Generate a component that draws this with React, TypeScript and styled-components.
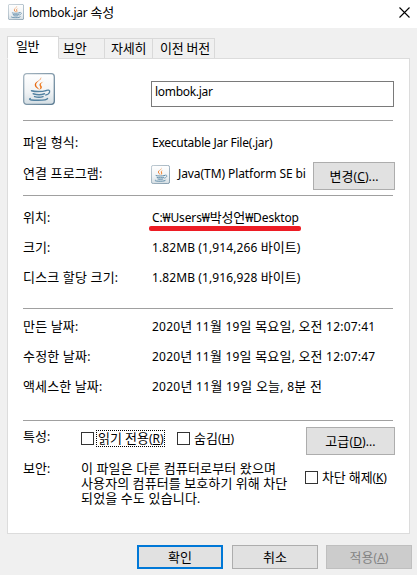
import React from "react";
import styled, { createGlobalStyle, css } from "styled-components";

const GlobalStyle = createGlobalStyle`
  * { box-sizing: border-box; }
  body {
    margin: 0;
    background: #f0f0f0;
    color: #000;
    font-family: "Noto Sans CJK KR", sans-serif;
    font-size: 13px;
  }
`;

const Dialog = styled.div`
  width: 417px;
  height: 575px;
  display: flex;
  flex-direction: column;
  background: #f0f0f0;
  overflow: hidden;
`;

const TitleBar = styled.header`
  height: 28px;
  flex: none;
  display: flex;
  align-items: flex-start;
  background: #fff;
  padding: 4px 7px 0 8px;
`;

const TitleText = styled.div`
  flex: 1;
  margin: 0 0 0 5px;
  display: flex;
  height: 16px;
  align-items: center;
`;

const CloseIcon = styled.svg`
  width: 11px;
  height: 11px;
  margin: 3px 0 0;
`;

const Line = styled.span<{ $ls?: number }>`
  display: block;
  white-space: pre;
  line-height: 15px;
  letter-spacing: ${(p) => p.$ls ?? 0}px;
`;

const Latin = styled.span`
  font-family: "Noto Sans", "Noto Sans CJK KR", sans-serif;
  font-size: 12px;
`;

const AccessKey = styled.u`
  text-decoration-thickness: 1px;
  text-underline-offset: 1px;
`;

/* Hangul and Latin runs use different faces, so each run is wrapped on its own. */
function T({ ls, children }: { ls?: number; children: string }) {
  const runs = children.split(/([^\uac00-\ud7a3]+)/).filter(Boolean);
  return (
    <Line $ls={ls}>
      {runs.map((r, i) => {
        if (/[\uac00-\ud7a3]/.test(r)) return r;
        const key = r.match(/^(.*)&(.)(.*)$/);
        return (
          <Latin key={i}>
            {key ? (
              <>
                {key[1]}
                <AccessKey>{key[2]}</AccessKey>
                {key[3]}
              </>
            ) : (
              r
            )}
          </Latin>
        );
      })}
    </Line>
  );
}

const Tabs = styled.nav`
  flex: none;
  display: flex;
  align-items: flex-end;
  height: 31px;
  padding-left: 7px;
`;

const Tab = styled.div<{ $w: number; $pad: number; $active?: boolean }>`
  width: ${(p) => p.$w}px;
  height: 21px;
  padding: 1px 0 0 ${(p) => p.$pad}px;
  border: 1px solid #d9d9d9;
  border-left: 0;
  background: #f0f0f0;
  ${(p) =>
    p.$active &&
    css`
      height: 23px;
      border-left: 1px solid #d9d9d9;
      border-bottom-color: #fff;
      background: #fff;
      position: relative;
      z-index: 1;
    `}
`;

const Pane = styled.main`
  flex: none;
  width: 403px;
  height: 476px;
  margin: -1px 0 0 7px;
  padding: 0 16px 0 15px;
  background: #fff;
  border: 1px solid #dcdcdc;
  display: flex;
  flex-direction: column;
`;

const Section = styled.section<{ $h: number; $top?: number }>`
  height: ${(p) => p.$h}px;
  padding-top: ${(p) => p.$top ?? 0}px;
  flex: none;
  & + & {
    border-top: 1px solid #a0a0a0;
  }
`;

const Header = styled.div`
  display: flex;
  padding-top: 14px;
`;

const NameField = styled.div`
  flex: none;
  width: 243px;
  height: 26px;
  margin: 8px 0 0 96px;
  padding: 1px 0 0 3px;
  border: 1px solid #7a7a7a;
`;

const Row = styled.div`
  display: flex;
  align-items: center;
  height: 30px;
`;

const ProgramRow = styled.div`
  display: flex;
  align-items: flex-start;
  height: 33px;
  padding-top: 5px;
`;

const Label = styled.div<{ $w?: number }>`
  width: ${(p) => p.$w ?? 129}px;
  flex: none;
`;

const ProgramLabel = styled(Label)`
  padding-top: 3px;
`;

const Program = styled.div`
  flex: none;
  display: flex;
  align-items: flex-start;
  width: 162px;
  gap: 8px;
  margin: 3px 0 0 -1px;
`;

const Marked = styled.div`
  position: relative;
  &::after {
    content: "";
    position: absolute;
    left: -3px;
    top: 17px;
    width: 152px;
    height: 5px;
    border-radius: 2px;
    background: #ed1c24;
  }
`;

const Button = styled.div<{ $w: number; $h: number; $kind?: "default" | "disabled" }>`
  flex: none;
  width: ${(p) => p.$w}px;
  height: ${(p) => p.$h}px;
  display: flex;
  align-items: center;
  justify-content: center;
  padding-bottom: 1px;
  background: #e1e1e1;
  border: 1px solid #adadad;
  ${(p) => p.$kind === "default" && css`border: 2px solid #0078d7;`}
  ${(p) =>
    p.$kind === "disabled" &&
    css`
      background: #cccccc;
      border-color: #bfbfbf;
      color: #838383;
    `}
`;

const Attributes = styled.div`
  display: flex;
  height: 39px;
`;

const AttrLabel = styled.div`
  width: 58px;
  flex: none;
  padding-top: 7px;
`;

const Check = styled.div`
  display: flex;
  align-items: center;
  height: 17px;
`;

const Box = styled.span`
  width: 13px;
  height: 13px;
  border: 1px solid #333;
  background: #fff;
`;

const Focus = styled.div<{ $on?: boolean; $w?: number }>`
  width: ${(p) => (p.$w ? p.$w + "px" : "auto")};
  height: 17px;
  margin-left: 2px;
  padding-left: 1px;
  border: 1px ${(p) => (p.$on ? "dotted #000" : "solid transparent")};
  & > span {
    margin-top: -1px;
  }
`;

const Checks = styled.div`
  flex: none;
  display: flex;
  width: 225px;
  padding-top: 9px;
  gap: 12px;
`;

const AdvancedSlot = styled.div`
  flex: none;
  padding-top: 6px;
`;

const Security = styled.div`
  display: flex;
`;

const Message = styled.div`
  flex: none;
  width: 224px;
  & > span {
    height: 15px;
  }
`;

const Unblock = styled.div`
  flex: none;
  padding-top: 9px;
`;

const Footer = styled.footer`
  display: flex;
  gap: 9px;
  padding: 11px 0 0 137px;
`;

const ApplySlot = styled.div`
  margin-left: -1px;
`;

const IconSvg = styled.svg`
  flex: none;
  display: block;
`;

function JavaIcon({ size }: { size: number }) {
  return (
    <IconSvg width={size} height={size} viewBox="0 0 32 32">
      <defs>
        <linearGradient id="tile" x1="0" y1="0" x2="0" y2="1">
          <stop offset="0" stopColor="#fff" />
          <stop offset="0.6" stopColor="#f0f3f5" />
          <stop offset="1" stopColor="#d3dde3" />
        </linearGradient>
        <linearGradient id="edge" x1="0" y1="0" x2="1" y2="1">
          <stop offset="0" stopColor="#a5b5c0" />
          <stop offset="1" stopColor="#5b7b92" />
        </linearGradient>
      </defs>
      <rect x="0.7" y="0.7" width="30.6" height="30.6" rx="3" fill="url(#tile)" stroke="url(#edge)" strokeWidth="1.3" />
      <path d="M18 4c1.6 2.7-4.9 4.4-4.9 7.7 0 2.1 2.4 3.2 3.3 5.1-3-1.6-5.2-3.3-4.5-5.7C12.7 8.3 18.2 7.3 18 4z" fill="#e8690f" />
      <path d="M20.6 8.6c-3.3 1.2-4.9 2.4-3.8 4.4.8 1.4.6 2.4-.6 3.8 3.5-1.7 3-3 1.9-4.4-.8-1.2.3-2.4 2.5-3.8z" fill="#ee7d24" />
      <path d="M8.5 17.8c3.5 1.1 10.5 1.1 14.5-.2M10.2 20.8c3.3 1 8.6 1 11.2 0M11.6 23.6c2.6.7 6.2.7 8.4 0" fill="none" stroke="#5382a1" strokeWidth="1.5" strokeLinecap="round" />
      <path d="M22.5 17.8c2.5-1.5 4.7-.6 4.1 1.3-.5 1.5-2.4 2.7-4.4 3.1" fill="none" stroke="#5382a1" strokeWidth="1.3" />
      <path d="M7.2 25.6c-2 1.2 2 1.7 8.3 1.7 5.7 0 8.6-.6 9-1.7" fill="none" stroke="#5382a1" strokeWidth="1.5" strokeLinecap="round" />
    </IconSvg>
  );
}

export default function App() {
  return (
    <Dialog>
      <GlobalStyle />
      <TitleBar>
        <JavaIcon size={16} />
        <TitleText>
          <T ls={-0.2}>lombok.jar 속성</T>
        </TitleText>
        <CloseIcon viewBox="0 0 11 11">
          <path d="M0.5 0.5l10 10M10.5 0.5l-10 10" stroke="#000" strokeWidth="1.1" />
        </CloseIcon>
      </TitleBar>
      <Tabs>
        <Tab $active $w={52} $pad={8}><T ls={-0.5}>일반</T></Tab>
        <Tab $w={46} $pad={4}><T ls={-0.2}>보안</T></Tab>
        <Tab $w={48} $pad={6}><T ls={-0.2}>자세히</T></Tab>
        <Tab $w={62} $pad={7}><T ls={-0.2}>이전 버전</T></Tab>
      </Tabs>
      <Pane>
        <Section $h={61}>
          <Header>
            <JavaIcon size={32} />
            <NameField><T ls={-0.3}>lombok.jar</T></NameField>
          </Header>
        </Section>
        <Section $h={75} $top={6}>
          <Row>
            <Label><T ls={0.2}>파일 형식:</T></Label>
            <T ls={-0.25}>Executable Jar File(.jar)</T>
          </Row>
          <ProgramRow>
            <ProgramLabel><T ls={0.15}>연결 프로그램:</T></ProgramLabel>
            <Program>
              <JavaIcon size={19} />
              <T ls={-0.08}>Java(TM) Platform SE bi</T>
            </Program>
            <Button $w={82} $h={28}><T ls={0.1}>변경(&C)...</T></Button>
          </ProgramRow>
        </Section>
        <Section $h={113} $top={6}>
          <Row>
            <Label><T>위치:</T></Label>
            <Marked><T ls={-0.13}>C:₩Users₩박성언₩Desktop</T></Marked>
          </Row>
          <Row>
            <Label><T>크기:</T></Label>
            <T ls={0.1}>1.82MB (1,914,266 바이트)</T>
          </Row>
          <Row>
            <Label><T ls={0.2}>디스크 할당 크기:</T></Label>
            <T ls={0.1}>1.82MB (1,916,928 바이트)</T>
          </Row>
        </Section>
        <Section $h={112} $top={2}>
          <Row>
            <Label><T ls={0.2}>만든 날짜:</T></Label>
            <T ls={0.21}>2020년 11월 19일 목요일, 오전 12:07:41</T>
          </Row>
          <Row>
            <Label><T ls={0.2}>수정한 날짜:</T></Label>
            <T ls={0.21}>2020년 11월 19일 목요일, 오전 12:07:47</T>
          </Row>
          <Row>
            <Label><T ls={0.15}>액세스한 날짜:</T></Label>
            <T ls={0.26}>2020년 11월 19일 오늘, 8분 전</T>
          </Row>
        </Section>
        <Section $h={113}>
          <Attributes>
            <AttrLabel><T>특성:</T></AttrLabel>
            <Checks>
              <Check>
                <Box />
                <Focus $on $w={69}><T>읽기 전용(&R)</T></Focus>
              </Check>
              <Check>
                <Box />
                <Focus><T>숨김(&H)</T></Focus>
              </Check>
            </Checks>
            <AdvancedSlot>
              <Button $w={89} $h={28}><T ls={0.1}>고급(&D)...</T></Button>
            </AdvancedSlot>
          </Attributes>
          <Security>
            <Label $w={58}><T>보안:</T></Label>
            <Message>
              <T ls={0.17}>이 파일은 다른 컴퓨터로부터 왔으며</T>
              <T ls={0.12}>사용자의 컴퓨터를 보호하기 위해 차단</T>
              <T ls={0.2}>되었을 수도 있습니다.</T>
            </Message>
            <Unblock>
              <Check>
                <Box />
                <Focus><T ls={-0.1}>차단 해제(&K)</T></Focus>
              </Check>
            </Unblock>
          </Security>
        </Section>
      </Pane>
      <Footer>
        <Button $w={86} $h={24} $kind="default"><T>확인</T></Button>
        <Button $w={86} $h={24}><T>취소</T></Button>
        <ApplySlot>
          <Button $w={86} $h={24} $kind="disabled"><T>적용(&A)</T></Button>
        </ApplySlot>
      </Footer>
    </Dialog>
  );
}
